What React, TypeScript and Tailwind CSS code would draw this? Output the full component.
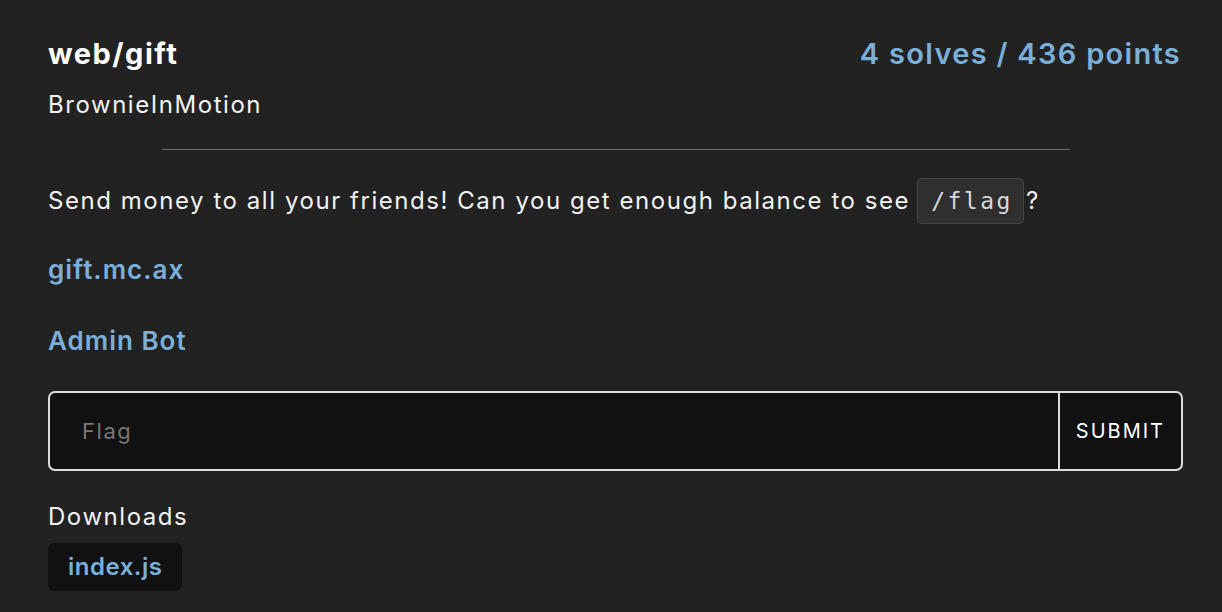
const App = () => {
  return (
    <div
      className="w-[1222px] h-[612px] bg-[#222222] text-[#f2f2f2] overflow-hidden tracking-[1.55px]"
      style={{ fontFamily: "Inter, 'Noto Sans', sans-serif" }}
    >
      <div className="pl-[48px] pt-[32px] pr-[39px]">
        {/* header */}
        <div className="flex items-start justify-between">
          <div className="flex flex-col">
            <h1 className="text-[29px] leading-[44px] font-bold text-white tracking-[1.5px]">web/gift</h1>
            <span className="mt-[13px] text-[24px] leading-[32px]">BrownieInMotion</span>
          </div>
          <span className="mr-[2px] text-[29px] leading-[44px] font-semibold text-[#7aafda] tracking-[1.3px]">
            4 solves / 436 points
          </span>
        </div>

        <div className="mx-auto mt-[28px] w-[80%] h-px bg-[#6a6a6a]" />

        {/* description */}
        <p className="mt-[27px] text-[24px] leading-[48px] flex items-center">
          Send money to all your friends! Can you get enough balance to see
          <code
            className="ml-[7px] mr-[2px] pl-[13px] pr-[10px] h-[46px] flex items-center rounded-[5px] bg-[#2f2f2f] border border-[#454545] text-[#d8d8d8] text-[23px] tracking-[2.5px]"
            style={{ fontFamily: "'DejaVu Sans Mono', monospace" }}
          >
            /flag
          </code>
          ?
        </p>

        <a className="block mt-[27px] text-[26px] leading-[36px] font-semibold text-[#7aafda] tracking-[1px]">
          gift.mc.ax
        </a>
        <a className="block mt-[35px] text-[26px] leading-[36px] font-semibold text-[#7aafda] tracking-[1px]">
          Admin Bot
        </a>

        {/* flag input */}
        <div className="mt-[32px] flex h-[80px] rounded-[7px] border-2 border-[#dcdcdc] bg-[#111111] overflow-hidden">
          <div className="flex-1 flex items-center pl-[32px] text-[22px] text-[#777777]">Flag</div>
          <div className="w-[2px] bg-[#dcdcdc]" />
          <button className="px-[16px] text-[20px] tracking-[2px] text-white">SUBMIT</button>
        </div>

        {/* downloads */}
        <div className="mt-[28px] text-[24px] leading-[36px]">Downloads</div>
        <div className="mt-[8px] inline-flex items-center h-[48px] px-[20px] rounded-[6px] bg-[#111111] text-[24px] font-semibold text-[#7aafda] tracking-[0.5px]">
          index.js
        </div>
      </div>
    </div>
  );
};

export default App;
